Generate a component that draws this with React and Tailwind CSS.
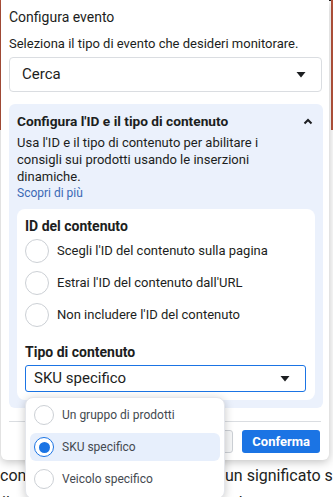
import React from 'react'

const font = { fontFamily: 'Roboto, "Liberation Sans", Arial, sans-serif' }

function Caret({ className = '' }) {
  return (
    <svg width="10" height="6" viewBox="0 0 10 6" className={className}>
      <path d="M0.5 0 L9.5 0 L5 5.5 Z" fill="#1c1e21" />
    </svg>
  )
}

function Radio({ size = 24, checked = false }) {
  return (
    <span
      className={`shrink-0 rounded-full bg-white flex items-center justify-center ${checked ? 'border-[1.5px] border-[#1b74e4]' : 'border border-[#ccd0d5]'}`}
      style={{ width: size, height: size }}
    >
      {checked && <span className="w-[11px] h-[11px] rounded-full bg-[#1b74e4]" />}
    </span>
  )
}

const idOptions = [
  "Scegli l'ID del contenuto sulla pagina",
  "Estrai l'ID del contenuto dall'URL",
  "Non includere l'ID del contenuto",
]

const typeOptions = ['Un gruppo di prodotti', 'SKU specifico', 'Veicolo specifico']

export default function App() {
  return (
    <div className="relative w-[333px] h-[497px] overflow-hidden bg-white text-[#1c1e21]" style={font}>
      {/* page behind the dialog */}
      <div className="absolute top-0 left-0 w-[1.5px] h-[130px] bg-[#b4533c]" />
      <div className="absolute top-0 right-0 w-[2px] h-[130px] bg-[#b4533c]" />
      <div className="absolute top-0 left-[280px] w-[51px] h-[1px] bg-[#222]" />
      <div className="absolute top-[464px] left-0 text-[16px] leading-[24px] whitespace-nowrap text-[#1c1e21]">cont</div>
      <div className="absolute top-[464px] left-[225px] text-[16px] leading-[24px] whitespace-nowrap text-[#1c1e21]">un significato sp</div>
      <div className="absolute top-[491px] left-[2px] text-[16px] leading-[24px] whitespace-nowrap text-[#1c1e21]">il catalogo dei prodotti utilizzato da</div>

      {/* dialog */}
      <div className="absolute top-0 left-[1px] w-[328px] bg-white rounded-b-md shadow-[0_2px_10px_rgba(0,0,0,0.25)] px-2 pt-[7px] pb-[7px]">
        <div className="text-[14px] leading-[20px] text-[#1c1e21]">Configura evento</div>
        <div className="mt-[8px] text-[13px] leading-[18px] text-[#1c1e21]">Seleziona il tipo di evento che desideri monitorare.</div>
        <div className="mt-[4px] h-[35px] w-[313px] border border-[#dadde1] rounded-[4px] flex items-center justify-between pl-[12px] pr-[15px]">
          <span className="text-[15px]">Cerca</span>
          <Caret />
        </div>

        <div className="mt-[12px] w-[314px] bg-[#ebf1fc] rounded-md px-2 pt-[8px] pb-[8px]">
          <div className="flex items-center justify-between">
            <span className="text-[13.7px] leading-[18px] font-bold">Configura l'ID e il tipo di contenuto</span>
            <svg width="10" height="7" viewBox="0 0 10 7" className="mr-[2px]">
              <path d="M1.5 5.5 L5 2 L8.5 5.5" fill="none" stroke="#1c1e21" strokeWidth="2" />
            </svg>
          </div>
          <p className="mt-[4px] text-[13px] leading-[17px] text-[#1c1e21] pr-[40px]">
            Usa l'ID e il tipo di contenuto per abilitare i consigli sui prodotti usando le inserzioni dinamiche.
          </p>
          <div className="text-[12px] leading-[16px] text-[#3b69b5]">Scopri di più</div>

          <div className="mt-[8px] bg-white rounded-lg px-2 pt-[8px] pb-[8px]">
            <div className="text-[14px] leading-[18px] font-bold">ID del contenuto</div>
            {idOptions.map(o => (
              <div key={o} className="h-8 flex items-center gap-[8px]">
                <Radio />
                <span className="text-[13px] text-[#1c1e21]">{o}</span>
              </div>
            ))}
            <div className="mt-[12px] text-[14px] leading-[18px] font-bold">Tipo di contenuto</div>
            <div className="relative mt-[4px]">
              <div className="h-[27px] w-[281px] border border-[#1b74e4] rounded-[3px] flex items-center justify-between pl-[8px] pr-[15px]">
                <span className="text-[15px]">SKU specifico</span>
                <Caret />
              </div>
              <div className="absolute top-[32px] left-0 w-[200px] bg-white rounded-lg shadow-[0_2px_10px_rgba(0,0,0,0.22)] border border-[#e4e6eb] pt-[1px] pb-[3px] z-10">
                {typeOptions.map((o, i) => (
                  <div key={o} className="h-8 px-[4px] py-[2px]">
                    <div className={`h-full flex items-center gap-[8px] pl-[4px] rounded-md ${i === 1 ? 'bg-[#e7effc]' : ''}`}>
                      <Radio size={20} checked={i === 1} />
                      <span className="text-[12px] text-[#444950]">{o}</span>
                    </div>
                  </div>
                ))}
              </div>
            </div>
          </div>
        </div>

        <div className="mt-[13px] h-[1px] bg-[#dadde1]" />
        <div className="mt-[8px] flex justify-end gap-[9px] pr-[1px]">
          <button className="h-[23px] px-[10px] border border-[#ccd0d5] rounded-[3px] bg-[#f5f6f7] text-[13px] font-bold text-[#4b4f56]">Annulla</button>
          <button className="h-[23px] px-[10px] rounded-[3px] bg-[#1b74e4] text-[13px] font-bold text-white">Conferma</button>
        </div>
      </div>
    </div>
  )
}
